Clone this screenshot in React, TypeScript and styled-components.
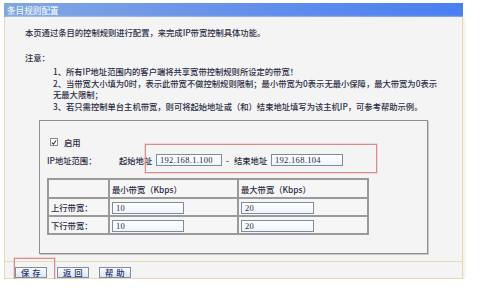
import React from "react";
import styled, { createGlobalStyle } from "styled-components";

const Global = createGlobalStyle`
  html, body {
    margin: 0;
    padding: 0;
    background: #ffffff;
  }
  body {
    font-family: "Noto Sans CJK SC", "Noto Sans", sans-serif;
    color: #2c2d44;
  }
`;

const notes = [
  "1、所有IP地址范围内的客户端将共享宽带控制规则所设定的带宽！",
  "2、当带宽大小填为0时，表示此带宽不做控制规则限制；最小带宽为0表示无最小保障，最大带宽为0表示",
  "无最大限制；",
  "3、若只需控制单台主机带宽，则可将起始地址或（和）结束地址填写为该主机IP，可参考帮助示例。",
];

const rows = [
  { label: "上行带宽：", min: "10", max: "20" },
  { label: "下行带宽：", min: "10", max: "20" },
];

const App = () => {
  return (
    <Page>
      <Global />
      <TitleBar>条目规则配置</TitleBar>
      <Panel>
        <Content>
          <Intro>本页通过条目的控制规则进行配置，来完成IP带宽控制具体功能。</Intro>
          <NoteHead>注意：</NoteHead>
          <NoteList>
            {notes.map((n) => (
              <NoteLine key={n}>{n}</NoteLine>
            ))}
          </NoteList>
          <Group>
            <CheckRow>
              <CheckBox>
                <svg width="7" height="7" viewBox="0 0 7 7">
                  <path d="M1 3.6 L2.8 5.4 L6 1.2" fill="none" stroke="#333" strokeWidth="1.2" />
                </svg>
              </CheckBox>
              启用
            </CheckRow>
            <IpRow>
              <IpLabel>IP地址范围：</IpLabel>
              <FieldLabel>起始地址</FieldLabel>
              <TextBox $w={66}>192.168.1.100</TextBox>
              <Dash>-</Dash>
              <FieldLabel>结束地址</FieldLabel>
              <TextBox $w={72}>192.168.104</TextBox>
            </IpRow>
            <Mark $left={105} $top={23} $w={232} $h={29} />
            <Grid>
              <colgroup>
                <col style={{ width: 61 }} />
                <col style={{ width: 129 }} />
                <col style={{ width: 130 }} />
              </colgroup>
              <tbody>
                <HeadRow>
                  <Cell />
                  <Cell>最小带宽（Kbps）</Cell>
                  <Cell>最大带宽（Kbps）</Cell>
                </HeadRow>
                {rows.map((r) => (
                  <BodyRow key={r.label}>
                    <Cell>{r.label}</Cell>
                    <Cell>
                      <TextBox $w={72}>{r.min}</TextBox>
                    </Cell>
                    <Cell>
                      <TextBox $w={73}>{r.max}</TextBox>
                    </Cell>
                  </BodyRow>
                ))}
              </tbody>
            </Grid>
          </Group>
        </Content>
        <Footer>
          <Button>保 存</Button>
          <Button>返 回</Button>
          <Button>帮 助</Button>
          <Mark $left={9} $top={-4} $w={41} $h={26} />
        </Footer>
      </Panel>
    </Page>
  );
};

export default App;

const Page = styled.div`
  width: 459px;
  padding: 3px 0 0 4px;
  font-size: 8.3px;
  font-weight: 500;
`;

const TitleBar = styled.div`
  height: 14px;
  line-height: 14px;
  padding-left: 3px;
  color: #ffffff;
  font-size: 8.6px;
  font-weight: 400;
  background: linear-gradient(90deg, #82a8e0 0%, #6893ea 45%, #4a7ff2 100%);
`;

const Panel = styled.div`
  height: 262px;
  box-sizing: border-box;
  display: flex;
  flex-direction: column;
  background: #f4f4f4;
  border: 1px solid #e8d7b6;
  border-top: none;
  box-shadow: 2px 0 2px #f6efe2;
`;

const Content = styled.div`
  flex: 1;
  padding: 9px 0 0 20px;
  position: relative;
`;

const Intro = styled.div`
  line-height: 12px;
  white-space: nowrap;
`;

const NoteHead = styled.div`
  line-height: 12px;
  margin-top: 13px;
`;

const NoteList = styled.div`
  margin: 3px 0 0 28px;
`;

const NoteLine = styled.div`
  line-height: 11.5px;
  white-space: nowrap;
`;

const Group = styled.div`
  position: relative;
  margin: 8px 0 0 14px;
  width: 389px;
  height: 134px;
  box-sizing: border-box;
  border: 1px solid #8f8f8f;
  box-shadow: 1px 1px 0 #c9c9c9;
  padding: 15px 0 0 7px;
`;

const CheckRow = styled.div`
  display: flex;
  align-items: center;
  gap: 6px;
  height: 12px;
  margin-left: 3px;
`;

const CheckBox = styled.span`
  width: 8px;
  height: 8px;
  box-sizing: border-box;
  border: 1px solid #8a8a8a;
  background: #ffffff;
  display: flex;
  align-items: center;
  justify-content: center;
`;

const IpRow = styled.div`
  display: flex;
  align-items: center;
  height: 14px;
  margin-top: 5px;
`;

const IpLabel = styled.span`
  width: 72px;
`;

const FieldLabel = styled.span`
  width: 37px;
  white-space: nowrap;
`;

const Dash = styled.span`
  width: 13px;
  text-align: center;
  margin-left: -1px;
`;

const TextBox = styled.span<{ $w: number }>`
  display: inline-block;
  box-sizing: border-box;
  width: ${(p) => p.$w}px;
  height: 12px;
  line-height: 10px;
  padding-left: 3px;
  border: 1px solid #7f8c9a;
  background: linear-gradient(180deg, #ffffff 0%, #eef5fb 100%);
  font-family: "Liberation Serif", serif;
  font-size: 8.5px;
  font-weight: 400;
  letter-spacing: 0.3px;
  color: #2a2a3a;
  vertical-align: middle;
`;

const Mark = styled.div<{ $left: number; $top: number; $w: number; $h: number }>`
  position: absolute;
  left: ${(p) => p.$left}px;
  top: ${(p) => p.$top}px;
  width: ${(p) => p.$w}px;
  height: ${(p) => p.$h}px;
  box-sizing: border-box;
  border: 1px solid #d68d8d;
  box-shadow: 0 0 0 1px rgba(225, 160, 160, 0.35);
  pointer-events: none;
`;

const Grid = styled.table`
  margin-top: 11px;
  width: 320px;
  border-collapse: collapse;
  table-layout: fixed;
  border: 2px solid #9a9a9a;
`;

const HeadRow = styled.tr`
  height: 19px;
`;

const BodyRow = styled.tr`
  height: 18px;
`;

const Cell = styled.td`
  border: 2px solid #9a9a9a;
  padding: 0 0 0 2px;
  white-space: nowrap;
  background: #f6f6f6;
  line-height: 12px;
`;

const Footer = styled.div`
  position: relative;
  height: 17px;
  box-sizing: border-box;
  border-top: 1px solid #ead9b8;
  display: flex;
  align-items: flex-start;
  gap: 10px;
  padding: 5px 0 0 10px;
`;

const Button = styled.div`
  width: 32px;
  height: 11px;
  line-height: 9px;
  box-sizing: border-box;
  text-align: center;
  border: 1px solid #7e8ea6;
  background: linear-gradient(180deg, #fbfdff 0%, #dce5f0 100%);
  color: #1d3570;
  font-size: 8.3px;
  letter-spacing: 0.5px;
  white-space: nowrap;
`;
